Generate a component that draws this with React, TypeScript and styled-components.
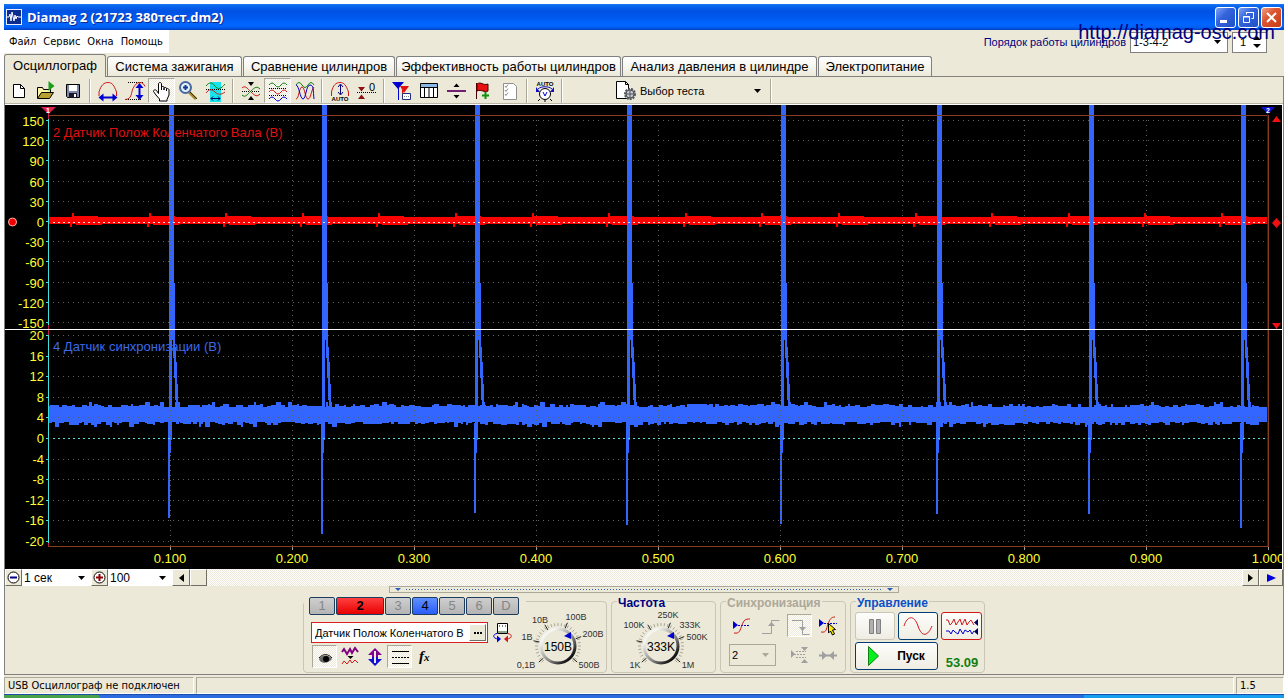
import React from "react";
import styled, { createGlobalStyle } from "styled-components";

const face = "#ece9d8";
const shade = "#aca899";
const navy = "#000080";
const sans = '"Liberation Sans", Arial, sans-serif';
const ui = '"DejaVu Sans Condensed", "DejaVu Sans", Tahoma, sans-serif';
const dither = `repeating-conic-gradient(#fff 0 25%, ${face} 0 50%) 0 0 / 2px 2px`;

const GlobalStyle = createGlobalStyle`
  * { box-sizing: border-box; }
  body { margin: 0; background: #fff; font: 12px ${sans}; color: #000; overflow-x: hidden; }
  button, input, select { font: inherit; color: inherit; margin: 0; padding: 0; border-radius: 0; }
  svg { display: block; flex: none; }
`;

/* ---------- window frame ---------- */

const Page = styled.div`
  padding: 4px 4px 0;
  display: flex;
  flex-direction: column;
  position: relative;
`;

const TitleBar = styled.header`
  display: flex;
  align-items: center;
  gap: 5px;
  height: 26px;
  padding: 0 2px;
  background: linear-gradient(#1b7af5 0, #0a66ee 2px, #0052e2 7px, #0058ee 13px, #0066ff 20px, #0062f8 23px, #0040c4 26px);
`;

const Title = styled.h1`
  flex: 1;
  margin: 0;
  color: #fff;
  font: bold 13px "Open Sans", "Noto Sans", sans-serif;
  text-shadow: 1px 1px 0 #0a2a90;
`;

const WindowButtons = styled.div`
  display: flex;
  gap: 2px;
`;

const WindowButton = styled.button<{ $close?: boolean }>`
  width: 21px;
  height: 21px;
  border: 1px solid #fff;
  border-radius: 3px;
  background: ${(p) =>
    p.$close
      ? "linear-gradient(135deg, #f0a088, #dd5530 40%, #c83c14)"
      : "linear-gradient(135deg, #7ea4f4, #3464dc 40%, #2050c8)"};
`;

const Frame = styled.main`
  background: ${face};
  display: flex;
  flex-direction: column;
`;

const MenuRow = styled.div`
  display: flex;
  justify-content: space-between;
  align-items: flex-start;
  height: 24px;
`;

const Menu = styled.nav`
  display: flex;
  gap: 7px;
  height: 23px;
  padding: 0 6px 0 5px;
  align-items: center;
  background: #fff;
`;

const MenuItem = styled.button`
  border: 0;
  background: none;
  font: 11px ${ui};
`;

const OrderBar = styled.div`
  display: flex;
  align-items: center;
  gap: 4px;
  height: 24px;
  padding-right: 17px;
  color: ${navy};
  font-size: 11px;
`;

const Watermark = styled.a`
  position: absolute;
  top: 20px;
  right: 13px;
  color: ${navy};
  font-size: 20px;
  line-height: 24px;
  text-decoration: none;
`;

/* ---------- generic controls ---------- */

const PickerBox = styled.span<{ $w: number; $h: number; $border?: string; $bg?: string }>`
  display: grid;
  grid-template-columns: 1fr 14px;
  align-items: center;
  width: ${(p) => p.$w}px;
  height: ${(p) => p.$h}px;
  border: ${(p) => (p.$border ? `1px solid ${p.$border}` : "0")};
  background: ${(p) => p.$bg || "#fff"};
  color: #000;
  & > select {
    grid-area: 1 / 1 / 2 / 3;
    width: 100%;
    height: 100%;
    padding: 0 2px;
    border: 0;
    background: none;
    appearance: none;
  }
  & > svg {
    grid-area: 1 / 2 / 2 / 3;
    pointer-events: none;
  }
`;

type PickerProps = { label: string; value: string; w: number; h: number; border?: string; bg?: string; caret?: string };

function Picker({ label, value, w, h, border, bg, caret = "#000" }: PickerProps) {
  return (
    <PickerBox $w={w} $h={h} $border={border} $bg={bg}>
      <select aria-label={label} defaultValue={value}>
        <option>{value}</option>
      </select>
      <svg width="9" height="4" viewBox="0 0 9 4">
        <path d="M1 0H8L4.500 4Z" fill={caret} />
      </svg>
    </PickerBox>
  );
}

const Spinner = styled.div`
  display: flex;
  align-items: center;
  width: 35px;
  height: 21px;
  padding-right: 6px;
  border: 1px solid #808080;
  background: #fff;
  color: #000;
  & > input {
    width: 20px;
    border: 0;
    text-align: center;
    background: none;
  }
`;

const SpinArrows = styled.div`
  display: flex;
  flex-direction: column;
  gap: 4px;
  & > button {
    display: block;
    border: 0;
    background: none;
  }
`;

/* ---------- tabs and toolbar ---------- */

const Tabs = styled.div`
  display: flex;
  align-items: flex-end;
  gap: 1px;
  height: 22px;
`;

const Tab = styled.button<{ $active?: boolean; $w: number }>`
  width: ${(p) => p.$w}px;
  height: ${(p) => (p.$active ? 23 : 20)}px;
  margin-bottom: ${(p) => (p.$active ? -1 : 0)}px;
  border: 1px solid #808080;
  border-bottom: 0;
  border-radius: 3px 3px 0 0;
  background: ${(p) => (p.$active ? face : "linear-gradient(#fff, #f4f3ec 60%, #ece9d8)")};
  font-size: 13px;
  line-height: 18px;
  white-space: nowrap;
  position: relative;
`;

const TabBody = styled.section`
  display: flex;
  flex-direction: column;
  border: 1px solid #808080;
`;

const Toolbar = styled.div`
  display: flex;
  align-items: center;
  height: 28px;
  border-bottom: 1px solid #fff;
  box-shadow: inset 0 -1px 0 #b8b5a5;
`;

const Divider = styled.span`
  width: 2px;
  height: 24px;
  margin: 0 3px;
  border-left: 1px solid ${shade};
  border-right: 1px solid #fff;
`;

const ToolButton = styled.button<{ $on?: boolean; $w?: number }>`
  display: flex;
  align-items: center;
  justify-content: center;
  width: ${(p) => p.$w || 27}px;
  height: 25px;
  border: 1px solid transparent;
  border-color: ${(p) => (p.$on ? `${shade} #fff #fff ${shade}` : "transparent")};
  background: ${(p) => (p.$on ? dither : "none")};
`;

const TestPicker = styled.label`
  display: flex;
  align-items: center;
  width: 153px;
  margin-left: 48px;
  font-size: 11px;
`;

/* ---------- scroll row ---------- */

const ScrollRow = styled.div`
  display: flex;
  height: 17px;
`;

const RaisedButton = styled.button<{ $w: number }>`
  display: flex;
  align-items: center;
  justify-content: center;
  width: ${(p) => p.$w}px;
  height: 17px;
  border: 1px solid;
  border-color: #fff #716f64 #716f64 #fff;
  background: ${face};
`;

const Track = styled.div`
  flex: 1;
  background: ${dither};
`;

/* ---------- lower panel ---------- */

const LowerPanel = styled.div`
  display: flex;
  flex-direction: column;
  align-items: center;
  height: 88px;
  font-size: 11px;
`;

const Splitter = styled.div`
  display: flex;
  align-items: center;
  justify-content: space-between;
  width: 510px;
  height: 7px;
  padding: 0 5px;
  border: 1px solid ${shade};
  & > i {
    flex: 1;
    height: 1px;
    margin: 0 5px;
    background: repeating-linear-gradient(90deg, #2a5cb8 0 1px, transparent 1px 3px);
  }
`;

const Groups = styled.div`
  display: flex;
  gap: 4px;
  margin-top: 8px;
`;

const Group = styled.fieldset<{ $w: number }>`
  position: relative;
  width: ${(p) => p.$w}px;
  height: 72px;
  margin: 0;
  padding: 0;
  border: 1px solid #c9c6b8;
  border-radius: 4px;
`;

const GroupTitle = styled.span<{ $color: string }>`
  position: absolute;
  top: -6px;
  left: 5px;
  padding: 0 1px;
  background: ${face};
  color: ${(p) => p.$color};
  font-weight: bold;
  font-size: 12px;
  line-height: 14px;
`;

const Row = styled.div<{ $gap?: number; $pad?: string; $top?: boolean }>`
  display: flex;
  align-items: ${(p) => (p.$top ? "flex-start" : "center")};
  gap: ${(p) => p.$gap || 0}px;
  padding: ${(p) => p.$pad || "0"};
`;

const ChannelSide = styled.div`
  display: flex;
  flex-direction: column;
  flex: none;
  width: 213px;
`;

const ChannelBar = styled.div`
  display: flex;
  gap: 1px;
  margin: -5px -9px 6px 0;
  padding-left: 5px;
  background: ${face};
`;

const Channel = styled.button<{ $bg?: string; $w?: number; $strong?: boolean }>`
  flex: none;
  width: ${(p) => p.$w || 26}px;
  height: 18px;
  border: 1px solid #1c3c60;
  border-radius: 2px;
  background: ${(p) => p.$bg || "linear-gradient(#cfcfcf, #b4b4b4)"};
  color: ${(p) => (p.$bg ? "#000" : "#858585")};
  font-weight: ${(p) => (p.$strong ? "bold" : "normal")};
  font-size: 13px;
  line-height: 14px;
`;

const NameBox = styled.div`
  display: flex;
  width: 177px;
  height: 21px;
  padding: 1px;
  border: 1px solid #d82020;
  background: #fff;
  & > input {
    flex: 1;
    min-width: 0;
    padding-left: 2px;
    border: 0;
    background: none;
  }
`;

const SyncButton = styled(ToolButton)`
  flex: none;
  width: 25px;
  height: 23px;
`;

const BigButton = styled.button<{ $w: number; $edge: string }>`
  display: flex;
  align-items: center;
  justify-content: center;
  gap: 18px;
  width: ${(p) => p.$w}px;
  height: 28px;
  border: 1px solid ${(p) => p.$edge};
  border-radius: 3px;
  background: linear-gradient(#fdfdfb, #efede3);
  font: bold 12px ${sans};
`;

const Fps = styled.output`
  width: 42px;
  padding-top: 13px;
  color: #108010;
  font: bold 13px ${sans};
  text-align: center;
`;

/* ---------- status bar ---------- */

const StatusBar = styled.footer`
  display: flex;
  gap: 2px;
  height: 19px;
  padding: 2px 0 0;
  background: ${face};
`;

const StatusCell = styled.div<{ $w?: number }>`
  flex: ${(p) => (p.$w ? "none" : 1)};
  width: ${(p) => (p.$w ? `${p.$w}px` : "auto")};
  padding-left: 3px;
  border: 1px solid;
  border-color: ${shade} #fff #fff ${shade};
  font: 11px/15px ${ui};
  white-space: nowrap;
`;

const TaskStrip = styled.div`
  display: flex;
  height: 4px;
  border-top: 1px solid #1c50a8;
  background: #2c6ce0;
  & > i { width: 96px; background: #48a048; border-radius: 0 4px 0 0; }
  & > b { width: 200px; margin-left: auto; background: #18a0f0; }
`;

/* ---------- icons ---------- */

type IconProps = { children: React.ReactNode; w?: number; h?: number };

function Icon({ children, w = 24, h = 22 }: IconProps) {
  return (
    <svg width={w} height={h} viewBox={`0 0 ${w} ${h}`} fill="none" strokeWidth="1" aria-hidden="true">
      {children}
    </svg>
  );
}

const R = "#d01818";
const G = "#108010";
const B = "#0000d0";
const M = "#8c1010";

const icons: Record<string, React.ReactNode> = {
  newFile: (
    <Icon>
      <path d="M6.5 4.5h7l4 4v9h-11z" fill="#fff" stroke="#000" />
      <path d="M13.5 4.5v4h4" stroke="#000" />
    </Icon>
  ),
  open: (
    <Icon>
      <path d="M3.500 18V7.500h5l1 2h7v3" fill="#fbf3a8" stroke="#000" />
      <path d="M3.500 18.500l4-6h12l-4 6z" fill="#b8a030" stroke="#000" />
      <path d="M14.500 1l6 5-6 5z" fill="#18a018" />
    </Icon>
  ),
  save: (
    <Icon>
      <path d="M5.500 4.500h13v13h-12l-1-1z" fill="#8088a8" stroke="#000" />
      <path d="M8 5h8v6H8z" fill="#fff" />
      <path d="M8 13h8v5H8z" fill="#181828" />
      <path d="M13 14h2v3h-2z" fill="#fff" />
    </Icon>
  ),
  widthFit: (
    <Icon>
      <path d="M3 16V12C5 5 8 2.500 12 2.500S18 5 20.500 12v4" stroke={R} />
      <path d="M5 17.500h14" stroke={B} strokeWidth="2" />
      <path d="M2.500 17.500l5-4v8zM21.500 17.500l-5-4v8z" fill={B} />
    </Icon>
  ),
  heightFit: (
    <Icon>
      <path d="M5 2.500h15M3 19.500h16" stroke="#000" strokeDasharray="1 1" />
      <path d="M2 19.500c7 0 6-7 8-11s4-6 7-6 4 2 5 4" stroke={R} />
      <path d="M16.500 5v13" stroke={B} strokeWidth="2" />
      <path d="M16.500 3l-4 5h8zM16.500 20l-4-5h8z" fill={B} />
    </Icon>
  ),
  hand: (
    <Icon>
      <path
        d="M8.500 13.500V4c0-2 3-2 3 0v6V7.500c0-1.500 2.500-1.500 2.500 0V10 8.500c0-1.500 2.500-1.500 2.500 0V11v-1.500c0-1.500 2.500-1 2.500.5v5l-2 4.500v1.500H9.500V19L6 15l-2.500-3.500c0-2 2-2 3-1z"
        fill="#fff"
        stroke="#000"
      />
    </Icon>
  ),
  zoom: (
    <Icon>
      <path d="M12 12l7 7" stroke="#a08828" strokeWidth="3" />
      <path d="M13 12l7 7" stroke="#403008" />
      <circle cx="8.500" cy="7.500" r="5.500" fill="#e4f0fc" stroke="#4868a0" strokeWidth="2" />
      <path d="M8.500 5v5M6 7.500h5" stroke="#103c90" strokeWidth="2" />
    </Icon>
  ),
  cut: (
    <Icon>
      <path d="M6 2h11v20H6z" fill="#18e4ec" />
      <path d="M2 6c3-4 6-4 9 0s6 3 10-2" stroke={G} />
      <path d="M2 9.500h19" stroke="#000" strokeDasharray="1 1" />
      <path d="M2 13c3-4 6-4 9-1s6 3 10 0" stroke={R} />
      <path d="M7 18.500h9M9 16.500l-2 2 2 2M14 16.500l2 2-2 2" stroke="#000060" />
    </Icon>
  ),
  cross: (
    <Icon>
      <path d="M9 2h6l-3 4zM9 20h6l-3-4z" fill="#000" />
      <path d="M3 11.500h18" stroke="#000" strokeDasharray="1 1" />
      <path d="M3 8c3-3 5 0 9 4s6 5 9 2" stroke={R} />
      <path d="M3 15c3 3 5 0 9-4s6-5 9-2" stroke={G} />
    </Icon>
  ),
  separate: (
    <Icon>
      <path d="M3 5q3-4 6 0t6 0t6 0" stroke={G} />
      <path d="M3 12q3-4 6 0t6 0t6 0" stroke={R} />
      <path d="M3 19q3-4 6 0t6 0t6 0" stroke={B} />
      <path d="M3 8.500h18M3 15.500h18" stroke="#000" strokeDasharray="1 1" />
    </Icon>
  ),
  overlay: (
    <Icon>
      <path d="M3 5q3-5 6 0t6 0t6 0" stroke={G} />
      <path d="M3 19c3 0 3-12 6-12s3 12 6 12 3-9 6-12" stroke={R} />
      <path d="M3 5c3 0 4 14 7 14s3-14 7-14 3 6 4 14" stroke={B} />
    </Icon>
  ),
  autoFit: (
    <Icon>
      <path d="M3.500 16V12C5 5 8 2.500 12 2.500S18 5 20.500 12v4" stroke={R} />
      <path d="M12.500 5v9M10 7l2.500-3L15 7M10 12l2.500 3 2.500-3" stroke="#000080" />
      <text x="12" y="21" textAnchor="middle" fontSize="6" fontWeight="bold" fill="#000" fontFamily="Liberation Sans">AUTO</text>
    </Icon>
  ),
  zero: (
    <Icon>
      <path d="M3 7h7l-3.500 4.500zM3 19h7l-3.500-4.500z" fill={M} />
      <path d="M2 12.500h19" stroke="#000" strokeDasharray="1 1" />
      <text x="14" y="11" fontSize="11" fill="#000" fontFamily="Liberation Sans">0</text>
    </Icon>
  ),
  markers: (
    <Icon>
      <path d="M2 2h12l-6 7z" fill={B} />
      <path d="M10 6h9l-5 7z" fill="#e01010" />
      <path d="M8.500 8v12" stroke={B} />
      <path d="M12.500 10v7" stroke="#e01010" />
      <path d="M12.500 13.500h8v6h-8z" fill="#fff" stroke="#203080" />
      <path d="M14 16.500h5" stroke="#808080" strokeDasharray="1 1" />
    </Icon>
  ),
  table: (
    <Icon>
      <path d="M3.500 3.500h17v14h-17z" fill="#fff" stroke="#000" />
      <path d="M4 4h16v3H4z" fill="#88b8e8" />
      <path d="M3 7.500h18M7.500 7v10M12 7v10M16.500 7v10" stroke="#000" />
    </Icon>
  ),
  splitLine: (
    <Icon>
      <path d="M9.500 7h6l-3-3.500zM9.500 15h6l-3 3.500z" fill="#000" />
      <path d="M3 11h19" stroke="#702070" strokeWidth="2" />
    </Icon>
  ),
  flag: (
    <Icon>
      <path d="M5.500 3v16" stroke="#400" />
      <path d="M6 4c4-3 6 2 11 0v7c-4 2-6-2-11 0z" fill="#e81010" stroke="#400" />
      <path d="M14.500 12v7M11 15.500h7" stroke="#109010" strokeWidth="2" />
    </Icon>
  ),
  checklist: (
    <Icon>
      <path d="M5.500 3.500h10l3 3v13h-13z" fill="#fff" stroke="#909090" />
      <path d="M7 6l1 1.500 2-3M7 10l1 1.500 2-3M7 14l1 1.500 2-3" stroke="#909090" />
    </Icon>
  ),
  autoKnob: (
    <Icon>
      <text x="12" y="6" textAnchor="middle" fontSize="6" fontWeight="bold" fill="#000" fontFamily="Liberation Sans">AUTO</text>
      <path d="M5 9c3-3 11-3 14 0" stroke="#1010c0" />
      <path d="M3 7v5h4zM21 7v5h-4z" fill="#1010c0" />
      <circle cx="12" cy="14" r="5.500" fill="#fff" stroke="#000" />
      <path d="M10 12l2 4 2-4" stroke={B} />
      <path d="M7 19l-2 2M17 19l2 2M12 20v2" stroke="#000" />
    </Icon>
  ),
  test: (
    <Icon>
      <path d="M2.500 1.500h9l3 3v14h-12z" fill="#fff" stroke="#000" />
      <path d="M11.500 1.500v3h3" stroke="#000" />
      <circle cx="16" cy="14" r="5" fill="#b0b4b8" stroke="#505458" strokeWidth="2" strokeDasharray="2 1" />
      <circle cx="16" cy="14" r="4" fill="#c8ccd0" stroke="#505458" />
      <path d="M16 10v8M12 14h8" stroke="#505458" />
    </Icon>
  ),
  swap: (
    <Icon>
      <path d="M7.500 1.500h10v10h-10z" fill="#fff" stroke="#000" />
      <path d="M8 9h9v2H8z" fill="#88a888" />
      <path d="M9 4h1M12 4h1M15 4h1" stroke="#000" />
      <path d="M7 11.500c-5 1-4 5 1 5.500" stroke={B} />
      <path d="M7 13.500v7l4-3.500z" fill={B} />
      <path d="M18 11.500c5 1 4 5-1 5.500" stroke={R} />
      <path d="M18 13.500v7l-4-3.500z" fill={R} />
    </Icon>
  ),
  eye: (
    <Icon>
      <path d="M6 13c4-5 10-4 13 0-3 4-9 5-12 2z" fill="#666" />
      <circle cx="13" cy="13" r="3" fill="#000" />
      <path d="M6 12c4-5 10-4 13 0" stroke="#111" />
    </Icon>
  ),
  invert: (
    <Icon>
      <path d="M4 6l2-3 3 5 3-5 2 4 3-5 3 4" stroke="#800080" strokeWidth="2" />
      <path d="M9.500 10h6l-3 3z" fill="#000" />
      <path d="M4 18l2-3 3 3 3-4 2 3 3-3 3 3" stroke={R} />
    </Icon>
  ),
  shift: (
    <Icon>
      <path d="M12 2l-7 7h4v2h6V9h4z" fill="#800090" />
      <path d="M12 20l-7-7h4v-2h6v2h4z" fill="#1010d0" />
      <path d="M12 5v12" stroke={face} strokeWidth="2" />
    </Icon>
  ),
  lines: (
    <Icon>
      <path d="M4 5.500h17M4 17.500h17" stroke="#000" />
      <path d="M4 11.500h17" stroke="#000" strokeDasharray="2 1" />
    </Icon>
  ),
  fx: (
    <Icon>
      <text x="6" y="15" fontSize="15" fontStyle="italic" fontWeight="bold" fill="#000" fontFamily="Liberation Serif">
        f<tspan fontSize="11">x</tspan>
      </text>
    </Icon>
  ),
  trigger: (
    <Icon>
      <path d="M3 6v8l5-4z" fill={B} />
      <path d="M8 10.500h12" stroke={B} strokeDasharray="2 1" />
      <path d="M4 18c6 1 6-3 8-8s3-6 8-6" stroke={R} />
    </Icon>
  ),
  rise: (
    <Icon>
      <path d="M3 18.500h9.500v-13h8" stroke="#a0a0a0" />
      <path d="M9 11l3.500-4L16 11z" fill="#a0a0a0" />
    </Icon>
  ),
  fall: (
    <Icon>
      <path d="M4 5.500h10.500v14h7" stroke="#a0a0a0" />
      <path d="M11 12l3.500 4L18 12z" fill="#a0a0a0" />
    </Icon>
  ),
  triggerPick: (
    <Icon>
      <path d="M2 4v8l5-4z" fill={B} />
      <path d="M7 8.500h13" stroke={B} strokeDasharray="2 1" />
      <path d="M4 17c6 1 5-3 7-8s3-7 7-7" stroke={R} />
      <path d="M11.500 8.500l7 6-3 .5 2 4-2 1-2-4-2 2z" fill="#ffee00" stroke="#000" />
    </Icon>
  ),
  syncLevels: (
    <Icon>
      <path d="M4 6v8l4-4zM14 3h7l-3.500 4zM14 19h7l-3.500-4z" fill="#a0a0a0" />
      <path d="M7 10.500h11M9 7.500h10M9 13.500h10" stroke="#a0a0a0" strokeDasharray="2 1" />
    </Icon>
  ),
  squeeze: (
    <Icon>
      <path d="M3 11.500h18" stroke="#a0a0a0" strokeWidth="2" />
      <path d="M6 7v9l5-4.500zM18 7v9l-5-4.500z" fill="#a0a0a0" />
    </Icon>
  ),
};

const toolGroups: { id: string; label: string; on?: boolean }[][] = [
  [
    { id: "newFile", label: "Новый" },
    { id: "open", label: "Открыть" },
    { id: "save", label: "Сохранить" },
  ],
  [
    { id: "widthFit", label: "По ширине" },
    { id: "heightFit", label: "По высоте" },
    { id: "hand", label: "Рука", on: true },
    { id: "zoom", label: "Увеличить" },
    { id: "cut", label: "Фрагмент" },
  ],
  [
    { id: "cross", label: "Совместить" },
    { id: "separate", label: "Разделить", on: true },
    { id: "overlay", label: "Наложить" },
  ],
  [
    { id: "autoFit", label: "Автоподбор" },
    { id: "zero", label: "Ноль" },
  ],
  [
    { id: "markers", label: "Маркеры" },
    { id: "table", label: "Таблица" },
    { id: "splitLine", label: "Линия" },
    { id: "flag", label: "Метка" },
    { id: "checklist", label: "Отчёт" },
  ],
  [{ id: "autoKnob", label: "Авто" }],
];

/* ---------- oscilloscope chart ---------- */

const W = 1277;
const H = 464;
const axisX = 43;
const plotRight = 1263;
const tx = (t: number) => axisX + t * 1220;
const topY = (v: number) => 117 - (v * 101) / 150;
const lowY = (v: number) => 333 - v * 5.14;

function noise(seed: number) {
  let s = seed;
  return () => {
    s = (s * 16807) % 2147483647;
    return s / 2147483647;
  };
}

/* One jagged edge of the noise band, drawn as short level steps. */
function edge(seed: number, level: number, dir: number) {
  const rnd = noise(seed);
  const steps: [number, number, number][] = [];
  let x = axisX;
  while (x < plotRight - 1) {
    const next = Math.min(x + 2 + Math.floor(rnd() * 4), plotRight - 1);
    const a = rnd();
    const rise = a > 0.95 ? 5 : a > 0.8 ? 3 : a > 0.5 ? 2 : a > 0.25 ? 1 : 0;
    steps.push([x, next, level + dir * rise]);
    x = next;
  }
  return steps;
}

function bandPath() {
  const top = edge(4177, 302, -1).map(([a, b, y]) => `L${a} ${y}H${b}`);
  const bottom = edge(90213, 317, 1).map(([a, b, y]) => `L${b} ${y}H${a}`).reverse();
  return `M${axisX} 310${top.join("")}${bottom.join("")}Z`;
}

const spikes = [
  [164, 413], [317, 429], [470, 408], [622, 420], [776, 419], [932, 409], [1084, 409], [1236, 423],
];

const bursts = Array.from({ length: 16 }, (_, i) => 67 + Math.round(i * 76.6));

function Scope() {
  const topTicks = [150, 120, 90, 60, 30, 0, -30, -60, -90, -120, -150];
  const lowTicks = [20, 16, 12, 8, 4, 0, -4, -8, -12, -16, -20];
  const times = [1, 2, 3, 4, 5, 6, 7, 8, 9, 10];
  return (
    <ScopeBox>
      <ScopeSvg viewBox={`0 0 ${W} ${H}`} role="img" aria-label="Осциллограмма">
        <rect width={W} height={H} fill="#000" />
        <text x="48" y="32" fontSize="13" fill="#e01010">2 Датчик Полож Коленчатого Вала (В)</text>
        <text x="48" y="246" fontSize="13" fill="#3c6ae8">4 Датчик синхронизации (В)</text>

        <g fill="#ff0000" shapeRendering="crispEdges">
          <path d={`M${axisX} 112H${plotRight - 1}V119H${axisX}Z`} />
          {bursts.map((x) => (
            <path key={x} d={`M${x - 4} 112h4v-4h2v3h24v1h14v7h-10v1h-26v-1h-4v3h-2v-3h-2z`} />
          ))}
        </g>
        <g fill="#3366ff" shapeRendering="crispEdges">
          <path d={bandPath()} />
          {spikes.map(([x, low]) => (
            <g key={x}>
              <rect x={x} y="0" width="5" height="182" />
              <rect x={x} y="182" width="3" height="153" />
              <path d={`M${x - 1} 318h3v30h-1V${low}h-2z`} />
              <path d={`M${x + 3} 160h2v18h1v64h1v15h1v22h1v18h1v22h-3v-24h-1v-22h-1v-20h-1v-18h-1z`} />
            </g>
          ))}
        </g>

        <g stroke="#606060" strokeDasharray="1 4" shapeRendering="crispEdges">
          {topTicks.map((v) => v !== 0 && <path key={v} d={`M${axisX + 5} ${Math.round(topY(v)) - 0.5}H${plotRight}`} />)}
          {lowTicks.map((v) => v !== 0 && <path key={v} d={`M${axisX + 5} ${Math.round(lowY(v)) + 0.5}H${plotRight}`} />)}
          {times.slice(0, 9).map((n) => <path key={n} d={`M${Math.round(tx(n / 10)) + 0.5} 15V441`} />)}
        </g>
        <g strokeDasharray="2 3" shapeRendering="crispEdges">
          <path d={`M${axisX + 5} 117.5H${plotRight}`} stroke="#d8e0d8" />
          <path d={`M${axisX + 5} 333.500H${plotRight}`} stroke="#50e0d8" />
        </g>

        <g fontSize="13" fill="#ffff30">
          {topTicks.map((v) => <text key={v} x="39" y={topY(v) + 5} textAnchor="end">{v}</text>)}
        </g>
        <rect x="0" y="224" width="42" height="4" fill="#000" />
        <g fontSize="13" fill="#ffff30">
          {lowTicks.map((v) => <text key={v} x="39" y={lowY(v) + 5} textAnchor="end">{v}</text>)}
          {times.map((n) => <text key={n} x={tx(n / 10)} y="458" textAnchor="middle">{(n / 10).toFixed(3)}</text>)}
        </g>

        <g shapeRendering="crispEdges" fill="none">
          <path d={`M${axisX} 10.500H${plotRight + 0.5}V441.500H${axisX}`} stroke="#8a3c20" />
          <path d={`M${plotRight - 0.5} 8V441`} stroke="#1010a0" />
          <path d="M43.500 10V438" stroke="#40e0e0" />
          <path d="M43.500 8V14M43.500 220V230M43.500 438V441" stroke="#c02050" />
          <g stroke="#40e0e0">
            {topTicks.map((v) => <path key={v} d={`M41 ${Math.round(topY(v)) - 0.5}h3`} />)}
            {lowTicks.map((v) => <path key={v} d={`M41 ${Math.round(lowY(v)) + 0.5}h3`} />)}
          </g>
          <g stroke="#a0a0a0">
            {times.map((n) => <path key={n} d={`M${Math.round(tx(n / 10)) + 0.5} 442v3`} />)}
          </g>
          <path d={`M0 224.500H${W}`} stroke="#fff" />
        </g>

        <path d="M36 2h15l-7.500 7z" fill="#e02050" />
        <path d="M1256 2h14l-7 7z" fill="#1010d0" />
        <g fontSize="7" fontWeight="bold" fill="#fff" textAnchor="middle">
          <text x="43" y="8">1</text>
          <text x="1263" y="8">2</text>
        </g>
        <circle cx="7.500" cy="117" r="4" fill="#f00000" stroke="#ffb0b0" />
        <path d="M1267 17l4.500-6 4.500 6zM1267 118l4.500-5 4.500 5-4.500 5zM1267 218h9l-4.500 6z" fill="#f01010" />
      </ScopeSvg>
    </ScopeBox>
  );
}

const ScopeBox = styled.div`
  padding-right: 1px;
  background: #fff;
`;

const ScopeSvg = styled.svg`
  width: 100%;
  height: auto;
  font-family: ${sans};
`;

/* ---------- rotary knobs ---------- */

type KnobProps = { w: number; cx: number; value: string; marks: [string, number, number][] };

function Knob({ w, cx, value, marks }: KnobProps) {
  const cy = 44;
  const id = `knob${w}`;
  const at = (deg: number, r: number) => {
    const a = (deg * Math.PI) / 180;
    return `${(cx + Math.sin(a) * r).toFixed(1)} ${(cy - Math.cos(a) * r).toFixed(1)}`;
  };
  const small = Array.from({ length: 31 }, (_, i) => -135 + i * 9);
  const major = [-130, -78, -32, 22, 68, 130];
  return (
    <KnobSvg width={w} height="70" viewBox={`0 0 ${w} 70`} role="img" aria-label={value}>
      <defs>
        <linearGradient id={id} x1="0" y1="0" x2="1" y2="1">
          <stop offset="0.2" stopColor="#f4f4f0" />
          <stop offset="0.6" stopColor="#808080" />
          <stop offset="0.9" stopColor="#000" />
        </linearGradient>
      </defs>
      {small.map((d) => <path key={d} d={`M${at(d, 20)}L${at(d, 23)}`} stroke="#a8a698" />)}
      {major.map((d) => <path key={d} d={`M${at(d, 19)}L${at(d, 25)}`} stroke="#202020" />)}
      <circle cx={cx} cy={cy} r="17" fill={face} stroke={`url(#${id})`} strokeWidth="3" />
      <path d={`M${cx + 6} ${cy - 10}l7-4v7z`} fill="#0000d0" />
      <text x={cx} y={cy + 5} textAnchor="middle" fontSize="12">{value}</text>
      <g fontSize="9" textAnchor="middle" fill="#303030">
        {marks.map(([t, x, y]) => <text key={t} x={x} y={y}>{t}</text>)}
      </g>
    </KnobSvg>
  );
}

const KnobSvg = styled.svg`
  font-family: ${sans};
`;

/* ---------- page ---------- */

const tabs: [string, number][] = [
  ["Осциллограф", 102],
  ["Система зажигания", 135],
  ["Сравнение цилиндров", 152],
  ["Эффективность работы цилиндров", 225],
  ["Анализ давления в цилиндре", 195],
  ["Электропитание", 114],
];

export default function App() {
  return (
    <Page>
      <GlobalStyle />
      <TitleBar>
        <svg width="16" height="16" viewBox="0 0 16 16">
          <rect width="16" height="16" fill="#e8f0ff" />
          <rect x="1" y="1" width="14" height="14" fill="#0c2c90" />
          <path d="M1 8h2l1-3 1 7 1-9 2 9 1-6 1 4 1-3 1 1h3" stroke="#fff" fill="none" />
        </svg>
        <Title>Diamag 2 (21723 380тест.dm2)</Title>
        <WindowButtons>
          <WindowButton aria-label="Свернуть">
            <svg width="19" height="19" viewBox="0 0 19 19"><path d="M4 12h7v3H4z" fill="#fff" /></svg>
          </WindowButton>
          <WindowButton aria-label="Восстановить">
            <svg width="19" height="19" viewBox="0 0 19 19" fill="none" stroke="#fff">
              <path d="M7.500 6.500v-2h7v6h-2" /><path d="M7 4.500h8" /><path d="M4.500 8.500h6v6h-6zM4 9h7" />
            </svg>
          </WindowButton>
          <WindowButton $close aria-label="Закрыть">
            <svg width="19" height="19" viewBox="0 0 19 19"><path d="M5 5l9 9M14 5l-9 9" stroke="#fff" strokeWidth="2" /></svg>
          </WindowButton>
        </WindowButtons>
      </TitleBar>

      <Frame>
        <MenuRow>
          <Menu>
            {["Файл", "Сервис", "Окна", "Помощь"].map((m) => <MenuItem key={m}>{m}</MenuItem>)}
          </Menu>
          <OrderBar>
            <span>Порядок работы цилиндров</span>
            <Picker label="Порядок работы цилиндров" value="1-3-4-2" w={98} h={21} border="#808080" />
            <Spinner>
              <input aria-label="Цилиндр" defaultValue="1" />
              <SpinArrows>
                <button aria-label="Больше"><svg width="8" height="4" viewBox="0 0 8 4"><path d="M0 4h8L4 0z" /></svg></button>
                <button aria-label="Меньше"><svg width="8" height="4" viewBox="0 0 8 4"><path d="M0 0h8L4 4z" /></svg></button>
              </SpinArrows>
            </Spinner>
          </OrderBar>
        </MenuRow>

        <Tabs role="tablist">
          {tabs.map(([t, w], i) => (
            <Tab key={t} role="tab" aria-selected={i === 0} $active={i === 0} $w={w}>{t}</Tab>
          ))}
        </Tabs>

        <TabBody>
          <Toolbar>
            {toolGroups.map((group, i) => (
              <React.Fragment key={i}>
                {group.map((t) => (
                  <ToolButton key={t.id} $on={t.on} aria-label={t.label}>{icons[t.id]}</ToolButton>
                ))}
                <Divider />
              </React.Fragment>
            ))}
            <TestPicker>
              {icons.test}
              <Picker label="Выбор теста" value="Выбор теста" w={130} h={24} bg="none" />
            </TestPicker>
            <Divider />
          </Toolbar>

          <Scope />

          <ScrollRow>
            <RaisedButton $w={17} aria-label="Уменьшить">
              <svg width="13" height="13" viewBox="0 0 13 13"><circle cx="6.500" cy="6.500" r="5.500" fill="#fff" stroke="#000" /><path d="M3 6.500h7" stroke="#000080" strokeWidth="2" /></svg>
            </RaisedButton>
            <Picker label="Развёртка" value="1 сек" w={69} h={17} />
            <RaisedButton $w={17} aria-label="Увеличить">
              <svg width="13" height="13" viewBox="0 0 13 13"><circle cx="6.500" cy="6.500" r="5.500" fill="#fff" stroke="#000" /><path d="M3 6.500h7M6.500 3v7" stroke="#900000" strokeWidth="2" /></svg>
            </RaisedButton>
            <Picker label="Масштаб" value="100" w={64} h={17} />
            <RaisedButton $w={18} aria-label="Влево"><svg width="5" height="8" viewBox="0 0 5 8"><path d="M5 0v8L0 4z" /></svg></RaisedButton>
            <RaisedButton $w={17} aria-label="Ползунок" />
            <Track />
            <RaisedButton $w={17} aria-label="Вправо"><svg width="5" height="8" viewBox="0 0 5 8"><path d="M0 0v8l5-4z" /></svg></RaisedButton>
            <RaisedButton $w={24} aria-label="В конец"><svg width="9" height="8" viewBox="0 0 9 8"><path d="M0 0v8l9-4z" fill="#0000e0" /></svg></RaisedButton>
          </ScrollRow>

          <LowerPanel>
            <Splitter>
              <svg width="6" height="3" viewBox="0 0 6 3"><path d="M0 0h6L3 3z" fill="#2a5cb8" /></svg>
              <i />
              <svg width="6" height="3" viewBox="0 0 6 3"><path d="M0 0h6L3 3z" fill="#2a5cb8" /></svg>
            </Splitter>
            <Groups>
              <Group $w={304} aria-label="Каналы">
                <Row $top>
                  <ChannelSide>
                    <ChannelBar>
                      <Channel>1</Channel>
                      <Channel $w={48} $strong $bg="linear-gradient(#ff4040, #e80000)">2</Channel>
                      <Channel>3</Channel>
                      <Channel $bg="linear-gradient(#6090ff, #2a5cf8)">4</Channel>
                      <Channel>5</Channel>
                      <Channel>6</Channel>
                      <Channel>D</Channel>
                    </ChannelBar>
                    <Row $gap={1} $pad="0 0 0 7px">
                      <NameBox>
                        <input aria-label="Название канала" defaultValue="Датчик Полож Коленчатого В" />
                        <RaisedButton $w={17} aria-label="Выбрать">
                          <svg width="8" height="2" viewBox="0 0 8 2"><path d="M0 0h2v2H0zM3 0h2v2H3zM6 0h2v2H6z" /></svg>
                        </RaisedButton>
                      </NameBox>
                      <SyncButton aria-label="Поменять">{icons.swap}</SyncButton>
                    </Row>
                    <Row $pad="1px 0 0 8px">
                      <SyncButton $on aria-label="Показать">{icons.eye}</SyncButton>
                      <SyncButton aria-label="Инвертировать">{icons.invert}</SyncButton>
                      <SyncButton aria-label="Сдвиг">{icons.shift}</SyncButton>
                      <SyncButton $on aria-label="Линии">{icons.lines}</SyncButton>
                      <SyncButton aria-label="Функция">{icons.fx}</SyncButton>
                    </Row>
                  </ChannelSide>
                  <Knob
                    w={89}
                    cx={41}
                    value="150В"
                    marks={[["10В", 23, 21], ["100В", 59, 18], ["1В", 10, 38], ["200В", 76, 35], ["0,1В", 9, 66], ["500В", 72, 66]]}
                  />
                </Row>
              </Group>

              <Group $w={105}>
                <GroupTitle $color={navy}>Частота</GroupTitle>
                <Knob
                  w={103}
                  cx={49}
                  value="333K"
                  marks={[["250K", 56, 16], ["100K", 22, 26], ["333K", 78, 26], ["500K", 85, 38], ["1K", 23, 66], ["1M", 76, 66]]}
                />
              </Group>

              <Group $w={126}>
                <GroupTitle $color={shade}>Синхронизация</GroupTitle>
                <Row $gap={4} $pad="12px 0 0 8px">
                  <SyncButton aria-label="Уровень">{icons.trigger}</SyncButton>
                  <SyncButton aria-label="Фронт">{icons.rise}</SyncButton>
                  <SyncButton $on aria-label="Спад">{icons.fall}</SyncButton>
                  <SyncButton aria-label="Указать уровень">{icons.triggerPick}</SyncButton>
                </Row>
                <Row $gap={4} $pad="6px 0 0 8px">
                  <Row $pad="0 6px 0 0">
                    <Picker label="Канал синхронизации" value="2" w={47} h={22} border={shade} bg="none" caret={shade} />
                  </Row>
                  <SyncButton aria-label="Уровни">{icons.syncLevels}</SyncButton>
                  <SyncButton aria-label="Сжать">{icons.squeeze}</SyncButton>
                </Row>
              </Group>

              <Group $w={135}>
                <GroupTitle $color="#0a50c8">Управление</GroupTitle>
                <Row $gap={3} $pad="10px 0 0 4px">
                  <BigButton $w={40} $edge="#c9c6b8" aria-label="Пауза">
                    <svg width="12" height="15" viewBox="0 0 12 15" fill="#b0b0b0" stroke="#808080"><path d="M.5.5h4v14h-4zM7.500.5h4v14h-4z" /></svg>
                  </BigButton>
                  <BigButton $w={40} $edge="#003c74" aria-label="Один кадр">
                    <svg width="30" height="22" viewBox="0 0 30 22" fill="none" stroke={R}><path d="M1 11C4 1 11-1 15 11s10 10 14 0" /></svg>
                  </BigButton>
                  <BigButton $w={41} $edge={R} aria-label="Непрерывно">
                    <svg width="34" height="22" viewBox="0 0 34 22" fill="none">
                      <path d="M1 5h2l2 5 2-2 2-4 2 6 2-3 2-3 2 6 3-6 2 6 2-3 2-2 3 5" stroke={R} />
                      <path d="M1 16h3l2 3 2-4 2 2 3 2 2-5 3 5 2-4 3 2 2-2 2 4 2-3" stroke={B} />
                      <path d="M33 4v7l-4-3.500zM33 13v7l-4-3.500z" fill="#000060" />
                    </svg>
                  </BigButton>
                </Row>
                <Row $gap={3} $pad="2px 0 0 4px">
                  <BigButton $w={83} $edge="#003c74">
                    <svg width="11" height="20" viewBox="0 0 11 20"><path d="M.5.5v19l10-9.500z" fill="#00f020" stroke="#108010" /></svg>
                    Пуск
                  </BigButton>
                  <Fps>53.09</Fps>
                </Row>
              </Group>
            </Groups>
          </LowerPanel>
        </TabBody>
      </Frame>

      <StatusBar>
        <StatusCell $w={190}>USB Осциллограф не подключен</StatusCell>
        <StatusCell />
        <StatusCell $w={48}>1.5</StatusCell>
      </StatusBar>
      <TaskStrip><i /><b /></TaskStrip>
      <Watermark href="http://diamag-osc.com">http://diamag-osc.com</Watermark>
    </Page>
  );
}
